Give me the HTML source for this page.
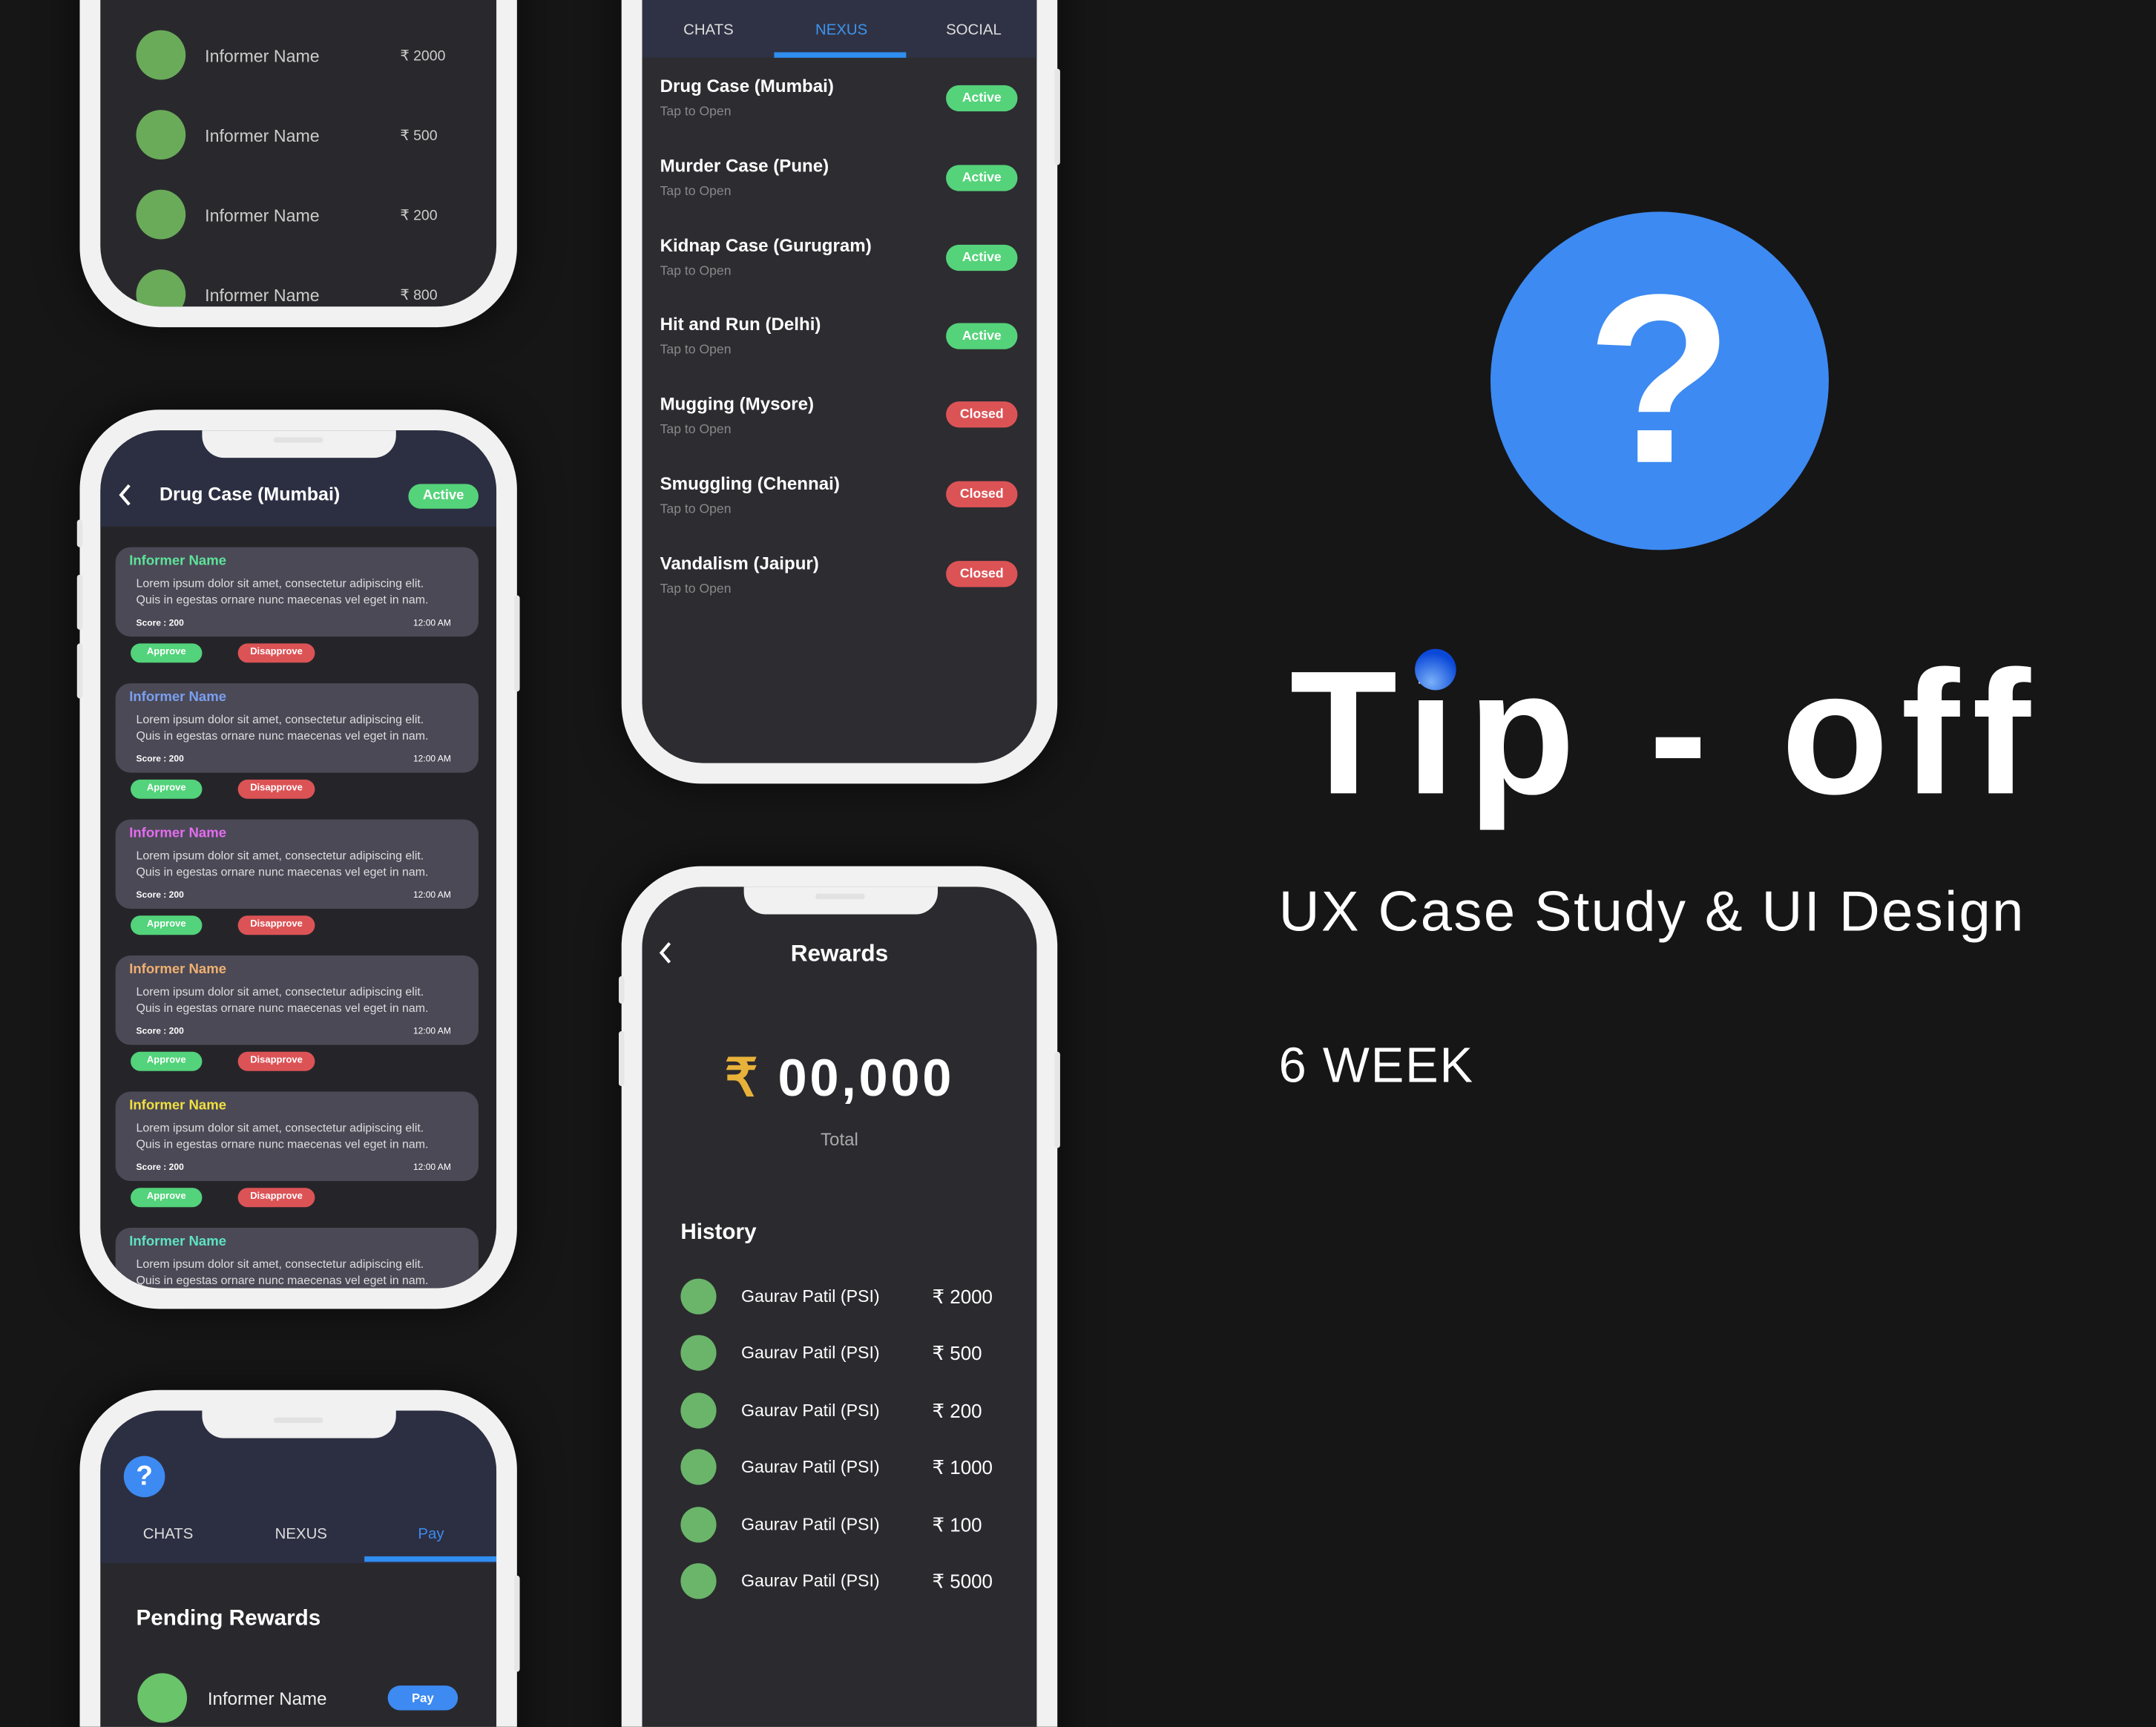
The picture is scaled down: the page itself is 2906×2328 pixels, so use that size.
<!DOCTYPE html>
<html><head><meta charset="utf-8"><style>
*{margin:0;padding:0;box-sizing:border-box}
html,body{width:2906px;height:2328px;background:#161616;overflow:hidden}
#w{position:absolute;left:0;top:0;width:1568px;height:1256px;overflow:hidden;transform:scale(1.85332);transform-origin:0 0;font-family:"Liberation Sans",sans-serif;color:#fff}
.a{position:absolute;white-space:nowrap}
.phone{position:absolute;background:#f1f1f1;border-radius:58px;box-shadow:0 0 30px rgba(0,0,0,.6)}
.scr{position:absolute;left:15px;right:15px;top:15px;bottom:15px;border-radius:44px;overflow:hidden;background:#2b2a2f}
.notch{position:absolute;left:74px;width:141px;top:-2px;height:22px;background:#f1f1f1;border-radius:0 0 16px 16px}
.notch:after{content:"";position:absolute;left:52px;top:7px;width:36px;height:4px;border-radius:2px;background:#e2e2e2}
.btn{position:absolute;background:#e6e6e6;width:4px;border-radius:2px}
.pill{position:absolute;border-radius:10px;text-align:center;color:#fff;font-weight:bold}
.card{position:absolute;left:11px;width:264px;height:65px;border-radius:11px;background:#4b4956}
.card .n{position:absolute;left:10px;top:5px;font-size:10px;font-weight:bold}
.card .l{position:absolute;left:15px;top:21px;font-size:8.6px;line-height:11.5px;color:#ddd}
.card .s{position:absolute;left:15px;top:52px;font-size:6.5px;font-weight:bold}
.card .t{position:absolute;right:20px;top:52px;font-size:6.5px}
.ap,.dp{position:absolute;height:14px;border-radius:7px;font-size:7px;font-weight:bold;text-align:center;line-height:14px}
.ap{left:22px;width:52px;background:#53d37b}
.dp{left:100px;width:56px;background:#dc5356}
.dot{position:absolute;border-radius:50%}
</style></head><body><div id="w">

<!-- Phone A -->
<div class="phone" style="left:58px;top:-420px;width:318px;height:658px">
 <div class="scr" style="background:#29292d">
  <div class="dot" style="left:26px;top:427px;width:36px;height:36px;background:#6aab5a"></div>
  <div class="a" style="left:76px;top:439px;font-size:12.5px;color:#ccc">Informer Name</div>
  <div class="a" style="left:218px;top:440px;font-size:10.5px;color:#ccc">₹ 2000</div>
  <div class="dot" style="left:26px;top:485px;width:36px;height:36px;background:#6aab5a"></div>
  <div class="a" style="left:76px;top:497px;font-size:12.5px;color:#ccc">Informer Name</div>
  <div class="a" style="left:218px;top:498px;font-size:10.5px;color:#ccc">₹ 500</div>
  <div class="dot" style="left:26px;top:543px;width:36px;height:36px;background:#6aab5a"></div>
  <div class="a" style="left:76px;top:555px;font-size:12.5px;color:#ccc">Informer Name</div>
  <div class="a" style="left:218px;top:556px;font-size:10.5px;color:#ccc">₹ 200</div>
  <div class="dot" style="left:26px;top:601px;width:36px;height:36px;background:#6aab5a"></div>
  <div class="a" style="left:76px;top:613px;font-size:12.5px;color:#ccc">Informer Name</div>
  <div class="a" style="left:218px;top:614px;font-size:10.5px;color:#ccc">₹ 800</div>
 </div>
</div>

<!-- Phone B -->
<div class="phone" style="left:58px;top:298px;width:318px;height:654px">
 <div class="btn" style="left:-2px;top:80px;height:20px"></div>
 <div class="btn" style="left:-2px;top:120px;height:40px"></div>
 <div class="btn" style="left:-2px;top:170px;height:40px"></div>
 <div class="btn" style="right:-2px;top:135px;height:70px"></div>
 <div class="scr" style="background:#252529">
  <div style="position:absolute;left:0;right:0;top:0;height:70px;background:#2c2f42"></div>
  <div class="notch"></div>
  <svg class="a" style="left:12px;top:38px" width="12" height="18" viewBox="0 0 12 18"><path d="M9 2 L3 9 L9 16" stroke="#fff" stroke-width="2.2" fill="none"/></svg>
  <div class="a" style="left:43px;top:39px;font-size:13.5px;font-weight:bold">Drug Case (Mumbai)</div>
  <div class="pill" style="left:224px;top:39px;width:51px;height:18px;line-height:18px;font-size:10px;background:#55d37a">Active</div>

  <div class="card" style="top:85px"><div class="n" style="color:#5de39a">Informer Name</div><div class="l">Lorem ipsum dolor sit amet, consectetur adipiscing elit.<br>Quis in egestas ornare nunc maecenas vel eget in nam.</div><div class="s">Score :  200</div><div class="t">12:00 AM</div></div>
  <div class="ap" style="top:155px">Approve</div><div class="dp" style="top:155px">Disapprove</div>
  <div class="card" style="top:184px"><div class="n" style="color:#7a9ff0">Informer Name</div><div class="l">Lorem ipsum dolor sit amet, consectetur adipiscing elit.<br>Quis in egestas ornare nunc maecenas vel eget in nam.</div><div class="s">Score :  200</div><div class="t">12:00 AM</div></div>
  <div class="ap" style="top:254px">Approve</div><div class="dp" style="top:254px">Disapprove</div>
  <div class="card" style="top:283px"><div class="n" style="color:#e46cf0">Informer Name</div><div class="l">Lorem ipsum dolor sit amet, consectetur adipiscing elit.<br>Quis in egestas ornare nunc maecenas vel eget in nam.</div><div class="s">Score :  200</div><div class="t">12:00 AM</div></div>
  <div class="ap" style="top:353px">Approve</div><div class="dp" style="top:353px">Disapprove</div>
  <div class="card" style="top:382px"><div class="n" style="color:#f0b070">Informer Name</div><div class="l">Lorem ipsum dolor sit amet, consectetur adipiscing elit.<br>Quis in egestas ornare nunc maecenas vel eget in nam.</div><div class="s">Score :  200</div><div class="t">12:00 AM</div></div>
  <div class="ap" style="top:452px">Approve</div><div class="dp" style="top:452px">Disapprove</div>
  <div class="card" style="top:481px"><div class="n" style="color:#f0e040">Informer Name</div><div class="l">Lorem ipsum dolor sit amet, consectetur adipiscing elit.<br>Quis in egestas ornare nunc maecenas vel eget in nam.</div><div class="s">Score :  200</div><div class="t">12:00 AM</div></div>
  <div class="ap" style="top:551px">Approve</div><div class="dp" style="top:551px">Disapprove</div>
  <div class="card" style="top:580px"><div class="n" style="color:#5de3c0">Informer Name</div><div class="l">Lorem ipsum dolor sit amet, consectetur adipiscing elit.<br>Quis in egestas ornare nunc maecenas vel eget in nam.</div></div>
 </div>
</div>

<!-- Phone C -->
<div class="phone" style="left:58px;top:1011px;width:318px;height:400px">
 <div class="btn" style="right:-2px;top:135px;height:70px"></div>
 <div class="scr" style="background:#29292d">
  <div style="position:absolute;left:0;right:0;top:0;height:111px;background:#2c2f42"></div>
  <div class="notch"></div>
  <div class="dot" style="left:17px;top:33px;width:30px;height:30px;background:#3d8af2;text-align:center;line-height:30px;font-weight:bold;font-size:20px">?</div>
  <div class="a" style="left:31px;top:84px;font-size:11px;color:#ddd">CHATS</div>
  <div class="a" style="left:127px;top:84px;font-size:11px;color:#ddd">NEXUS</div>
  <div class="a" style="left:231px;top:84px;font-size:11px;color:#3d8af2">Pay</div>
  <div style="position:absolute;left:192px;width:97px;top:106px;height:4px;background:#2f8ef0"></div>
  <div class="a" style="left:26px;top:143px;font-size:16px;font-weight:bold">Pending Rewards</div>
  <div class="dot" style="left:27px;top:191px;width:36px;height:36px;background:#6ac46a"></div>
  <div class="a" style="left:78px;top:202px;font-size:13px;color:#eee">Informer Name</div>
  <div class="pill" style="left:209px;top:200px;width:51px;height:18px;line-height:18px;font-size:9px;background:#3d8af2">Pay</div>
 </div>
</div>

<!-- Phone D -->
<div class="phone" style="left:452px;top:-100px;width:317px;height:670px">
 <div class="btn" style="right:-2px;top:150px;height:70px"></div>
 <div class="scr" style="background:#2d2c31">
  <div style="position:absolute;left:0;right:0;top:0;height:127px;background:#2f3244"></div>
  <div class="a" style="left:30px;top:101px;font-size:11px;color:#ddd">CHATS</div>
  <div class="a" style="left:126px;top:101px;font-size:11px;color:#3d95f0">NEXUS</div>
  <div class="a" style="left:221px;top:101px;font-size:11px;color:#ddd">SOCIAL</div>
  <div style="position:absolute;left:96px;width:96px;top:123px;height:4px;background:#2f8ef0"></div>
  <div style="position:absolute;left:13px;top:140px">
   <div class="a" style="top:0;font-size:13px;font-weight:bold">Drug Case (Mumbai)</div><div class="a" style="top:21px;font-size:9.5px;color:#888">Tap to Open</div>
   <div class="a" style="top:58px;font-size:13px;font-weight:bold">Murder Case (Pune)</div><div class="a" style="top:79px;font-size:9.5px;color:#888">Tap to Open</div>
   <div class="a" style="top:116px;font-size:13px;font-weight:bold">Kidnap Case (Gurugram)</div><div class="a" style="top:137px;font-size:9.5px;color:#888">Tap to Open</div>
   <div class="a" style="top:173px;font-size:13px;font-weight:bold">Hit and Run  (Delhi)</div><div class="a" style="top:194px;font-size:9.5px;color:#888">Tap to Open</div>
   <div class="a" style="top:231px;font-size:13px;font-weight:bold">Mugging  (Mysore)</div><div class="a" style="top:252px;font-size:9.5px;color:#888">Tap to Open</div>
   <div class="a" style="top:289px;font-size:13px;font-weight:bold">Smuggling  (Chennai)</div><div class="a" style="top:310px;font-size:9.5px;color:#888">Tap to Open</div>
   <div class="a" style="top:347px;font-size:13px;font-weight:bold">Vandalism  (Jaipur)</div><div class="a" style="top:368px;font-size:9.5px;color:#888">Tap to Open</div>
  </div>
  <div class="pill" style="left:221px;top:147px;width:52px;height:19px;line-height:19px;font-size:9.5px;background:#55d37a">Active</div>
  <div class="pill" style="left:221px;top:205px;width:52px;height:19px;line-height:19px;font-size:9.5px;background:#55d37a">Active</div>
  <div class="pill" style="left:221px;top:263px;width:52px;height:19px;line-height:19px;font-size:9.5px;background:#55d37a">Active</div>
  <div class="pill" style="left:221px;top:320px;width:52px;height:19px;line-height:19px;font-size:9.5px;background:#55d37a">Active</div>
  <div class="pill" style="left:221px;top:377px;width:52px;height:19px;line-height:19px;font-size:9.5px;background:#dc5356">Closed</div>
  <div class="pill" style="left:221px;top:435px;width:52px;height:19px;line-height:19px;font-size:9.5px;background:#dc5356">Closed</div>
  <div class="pill" style="left:221px;top:493px;width:52px;height:19px;line-height:19px;font-size:9.5px;background:#dc5356">Closed</div>
 </div>
</div>

<!-- Phone E -->
<div class="phone" style="left:452px;top:630px;width:317px;height:700px">
 <div class="btn" style="left:-2px;top:80px;height:20px"></div>
 <div class="btn" style="left:-2px;top:120px;height:40px"></div>
 <div class="btn" style="right:-2px;top:135px;height:70px"></div>
 <div class="scr" style="background:#2b2a2f">
  <div class="notch"></div>
  <svg class="a" style="left:11px;top:39px" width="12" height="18" viewBox="0 0 12 18"><path d="M9 2 L3 9 L9 16" stroke="#fff" stroke-width="2.2" fill="none"/></svg>
  <div class="a" style="left:0;width:287px;text-align:center;top:39px;font-size:17px;font-weight:bold">Rewards</div>
  <div class="a" style="left:0;width:287px;text-align:center;top:117px;font-size:38px;font-weight:bold;letter-spacing:2px"><span style="color:#e8b23a">₹</span> 00,000</div>
  <div class="a" style="left:0;width:287px;text-align:center;top:176px;font-size:13px;color:#aaa">Total</div>
  <div class="a" style="left:28px;top:243px;font-size:16px;font-weight:bold">History</div>
  <div style="position:absolute;left:28px;top:285px">
   <div class="dot" style="left:0;top:0;width:26px;height:26px;background:#6ab56a"></div><div class="a" style="left:44px;top:6px;font-size:12.5px">Gaurav Patil (PSI)</div><div class="a" style="left:183px;top:5px;font-size:14px">₹ 2000</div>
   <div class="dot" style="left:0;top:41px;width:26px;height:26px;background:#6ab56a"></div><div class="a" style="left:44px;top:47px;font-size:12.5px">Gaurav Patil (PSI)</div><div class="a" style="left:183px;top:46px;font-size:14px">₹ 500</div>
   <div class="dot" style="left:0;top:83px;width:26px;height:26px;background:#6ab56a"></div><div class="a" style="left:44px;top:89px;font-size:12.5px">Gaurav Patil (PSI)</div><div class="a" style="left:183px;top:88px;font-size:14px">₹ 200</div>
   <div class="dot" style="left:0;top:124px;width:26px;height:26px;background:#6ab56a"></div><div class="a" style="left:44px;top:130px;font-size:12.5px">Gaurav Patil (PSI)</div><div class="a" style="left:183px;top:129px;font-size:14px">₹ 1000</div>
   <div class="dot" style="left:0;top:166px;width:26px;height:26px;background:#6ab56a"></div><div class="a" style="left:44px;top:172px;font-size:12.5px">Gaurav Patil (PSI)</div><div class="a" style="left:183px;top:171px;font-size:14px">₹ 100</div>
   <div class="dot" style="left:0;top:207px;width:26px;height:26px;background:#6ab56a"></div><div class="a" style="left:44px;top:213px;font-size:12.5px">Gaurav Patil (PSI)</div><div class="a" style="left:183px;top:212px;font-size:14px">₹ 5000</div>
  </div>
 </div>
</div>

<!-- Right side -->
<div class="dot" style="left:1084px;top:154px;width:246px;height:246px;background:#3d8af2"></div>
<div class="a" style="left:1084px;top:177px;width:246px;text-align:center;font-size:175px;font-weight:bold;line-height:200px">?</div>
<div class="a" style="left:938px;top:470px;font-size:128px;font-weight:bold;line-height:128px;letter-spacing:9px">Tip - off</div>
<div class="dot" style="left:1029px;top:472px;width:30px;height:30px;background:radial-gradient(circle at 40% 80%,#7ab0f8,#0a48d8 70%)"></div>
<div class="a" style="left:930px;top:640px;font-size:41px;letter-spacing:1.3px">UX Case Study &amp; UI Design</div>
<div class="a" style="left:930px;top:754px;font-size:36px;letter-spacing:1px">6 WEEK</div>

</div></body></html>
